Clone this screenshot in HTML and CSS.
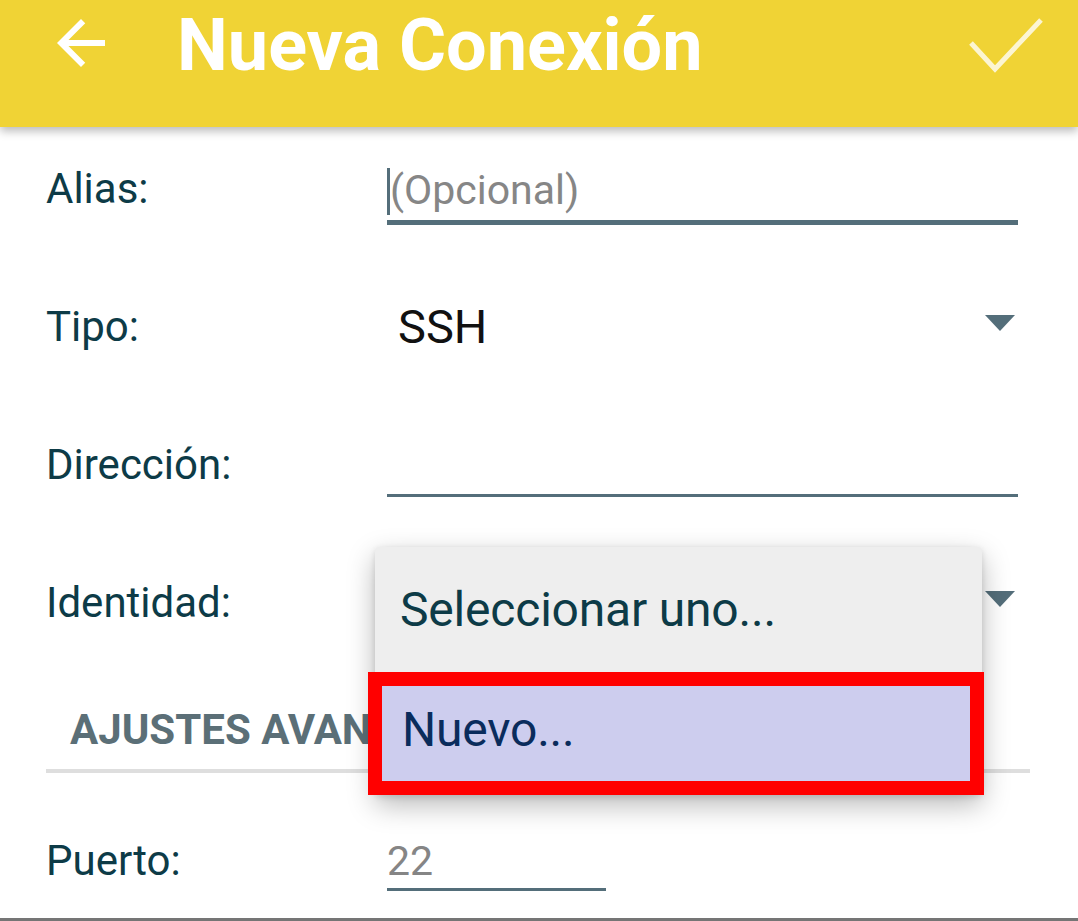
FILE: index.html
```html
<!DOCTYPE html>
<html lang="es">
<head>
<meta charset="utf-8">
<title>Nueva Conexión</title>
<link rel="stylesheet" href="styles.css">
</head>
<body>
<div class="screen">
  <header class="appbar">
    <svg class="back" viewBox="0 0 24 24" width="72" height="72"><path d="M20 11H7.83l5.59-5.59L12 4l-8 8 8 8 1.41-1.41L7.83 13H20v-2z" fill="#fff"/></svg>
    <h1 class="title">Nueva Conexión</h1>
    <svg class="check" viewBox="0 0 80 70" width="80" height="70"><polyline points="5,33 29,59 75,10" fill="none" stroke="rgba(255,255,255,0.78)" stroke-width="5"/></svg>
  </header>

  <main class="form">
    <div class="row">
      <div class="label">Alias:</div>
      <div class="field field-focused">
        <span class="caret"></span>
        <span class="hint">(Opcional)</span>
      </div>
    </div>

    <div class="row">
      <div class="label">Tipo:</div>
      <div class="spinner">
        <span class="spinner-text">SSH</span>
        <span class="arrow"></span>
      </div>
    </div>

    <div class="row">
      <div class="label">Dirección:</div>
      <div class="field"></div>
    </div>

    <div class="row">
      <div class="label">Identidad:</div>
      <div class="spinner spinner-open">
        <span class="arrow"></span>
        <div class="dropdown">
          <div class="dd-item">Seleccionar uno...</div>
          <div class="dd-item dd-selected">Nuevo...</div>
        </div>
      </div>
    </div>

    <div class="section">AJUSTES AVANZADOS</div>
    <div class="divider"></div>

    <div class="row row-port">
      <div class="label">Puerto:</div>
      <div class="field field-short"><span class="value">22</span></div>
    </div>
  </main>
  <div class="bottom-line"></div>
</div>
</body>
</html>
```

FILE: styles.css
```css
* { box-sizing: border-box; }

html, body {
  margin: 0;
  padding: 0;
  background: #ffffff;
}

body {
  font-family: Roboto, "Noto Sans", "Liberation Sans", sans-serif;
  width: 1078px;
  height: 921px;
  overflow: hidden;
}

.screen {
  width: 1078px;
  height: 921px;
  display: flex;
  flex-direction: column;
}

.appbar {
  position: relative;
  z-index: 2;
  flex: 0 0 127px;
  height: 127px;
  background: #f0d335;
  display: flex;
  align-items: flex-start;
  padding: 0 32px 0 45px;
  box-shadow: 0 4px 9px rgba(0, 0, 0, 0.28);
}

.back {
  display: block;
  margin-top: 7px;
  flex: 0 0 auto;
}

.title {
  margin: 4px 0 0 60px;
  font-family: Roboto, "Liberation Sans", sans-serif;
  font-weight: 700;
  font-size: 72px;
  line-height: 84px;
  color: #ffffff;
  letter-spacing: 0;
}

.check {
  display: block;
  margin-left: auto;
  margin-top: 10px;
  flex: 0 0 auto;
}

.form {
  flex: 1 1 auto;
  display: flex;
  flex-direction: column;
  position: relative;
}

.row {
  display: flex;
  align-items: flex-start;
  height: 138px;
  padding-left: 46px;
  flex: 0 0 auto;
}

.label {
  width: 341px;
  margin-top: 37px;
  font-size: 42px;
  line-height: 49px;
  color: #0d3b47;
}

.field {
  width: 631px;
  margin-top: 30px;
  height: 64px;
  border-bottom: 3px solid #546e7a;
  display: flex;
  align-items: flex-start;
}

.field-focused {
  height: 68px;
  border-bottom-width: 5px;
}

.caret {
  display: block;
  width: 3px;
  height: 47px;
  margin-top: 11px;
  background: #546e7a;
}

.hint {
  display: block;
  margin-top: 9px;
  font-size: 41px;
  line-height: 48px;
  color: #868686;
}

.spinner {
  position: relative;
  width: 631px;
  margin-top: 35px;
  height: 54px;
  display: flex;
  align-items: flex-start;
  padding-left: 11px;
  padding-right: 3px;
}

.spinner-text {
  font-size: 47px;
  line-height: 54px;
  color: #111111;
}

.arrow {
  margin-left: auto;
  margin-top: 15px;
  width: 0;
  height: 0;
  border-left: 15px solid transparent;
  border-right: 15px solid transparent;
  border-top: 16px solid #546e7a;
}

.dropdown {
  position: absolute;
  z-index: 3;
  left: -12px;
  top: -29px;
  width: 607px;
  background: #eeeeee;
  border-radius: 5px;
  box-shadow: 0 10px 28px rgba(0, 0, 0, 0.28), 0 2px 6px rgba(0, 0, 0, 0.12);
  display: flex;
  flex-direction: column;
}

.dd-item {
  height: 125px;
  line-height: 125px;
  padding-left: 25px;
  font-size: 48px;
  letter-spacing: -0.2px;
  color: #0d3b47;
  white-space: nowrap;
}

.dd-selected {
  height: 123px;
  line-height: 87px;
  width: 616px;
  margin-left: -7px;
  padding-left: 20px;
  border: 14px solid #ff0000;
  background: #cdcdee;
  color: #0a2c5c;
}

.section {
  margin-top: 27px;
  padding-left: 70px;
  font-size: 42px;
  font-weight: 700;
  line-height: 48px;
  color: #5b6f77;
  white-space: nowrap;
}

.divider {
  margin: 15px 48px 0 46px;
  height: 4px;
  background: #dedede;
}

.row-port {
  margin-top: 26px;
  height: 118px;
}

.field-short {
  width: 219px;
  margin-top: 28px;
  height: 64px;
}

.value {
  display: block;
  margin-top: 10px;
  font-size: 41px;
  line-height: 48px;
  color: #858585;
}

.bottom-line {
  flex: 0 0 3px;
  height: 3px;
  background: #757575;
}
```
